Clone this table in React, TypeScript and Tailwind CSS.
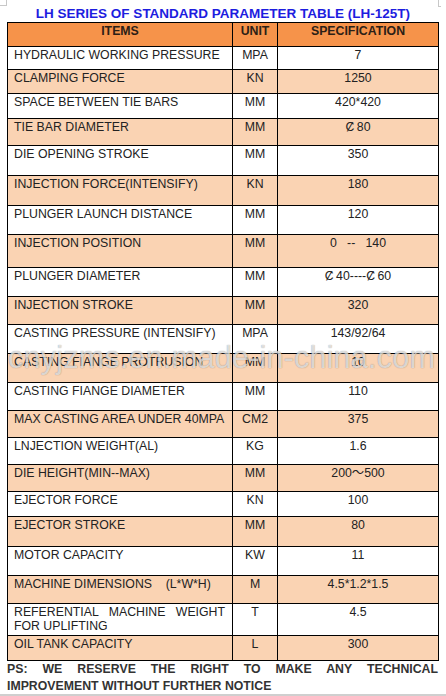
import React from "react";

type Row = {
  item: string;
  unit: string;
  spec: string;
  h: number;
};

const rows: Row[] = [
  { item: "HYDRAULIC WORKING PRESSURE", unit: "MPA", spec: "7", h: 23 },
  { item: "CLAMPING FORCE", unit: "KN", spec: "1250", h: 24 },
  { item: "SPACE BETWEEN TIE BARS", unit: "MM", spec: "420*420", h: 25 },
  { item: "TIE BAR DIAMETER", unit: "MM", spec: "Ȼ\u200980", h: 27 },
  { item: "DIE OPENING STROKE", unit: "MM", spec: "350", h: 30 },
  { item: "INJECTION FORCE(INTENSIFY)", unit: "KN", spec: "180", h: 30 },
  { item: "PLUNGER LAUNCH DISTANCE", unit: "MM", spec: "120", h: 29 },
  { item: "INJECTION POSITION", unit: "MM", spec: "0   --   140", h: 33 },
  { item: "PLUNGER DIAMETER", unit: "MM", spec: "Ȼ\u200940----Ȼ\u200960", h: 29 },
  { item: "INJECTION STROKE", unit: "MM", spec: "320", h: 28 },
  { item: "CASTING PRESSURE (INTENSIFY)", unit: "MPA", spec: "143/92/64", h: 29 },
  { item: "CASTING FIANGE PROTRUSION", unit: "MM", spec: "10", h: 29 },
  { item: "CASTING FIANGE DIAMETER", unit: "MM", spec: "110", h: 28 },
  { item: "MAX CASTING AREA UNDER 40MPA", unit: "CM2", spec: "375", h: 27 },
  { item: "LNJECTION WEIGHT(AL)", unit: "KG", spec: "1.6", h: 27 },
  { item: "DIE HEIGHT(MIN--MAX)", unit: "MM", spec: "200～500", h: 27 },
  { item: "EJECTOR FORCE", unit: "KN", spec: "100", h: 25 },
  { item: "EJECTOR STROKE", unit: "MM", spec: "80", h: 30 },
  { item: "MOTOR CAPACITY", unit: "KW", spec: "11", h: 29 },
  { item: "MACHINE DIMENSIONS    (L*W*H)", unit: "M", spec: "4.5*1.2*1.5", h: 28 },
  { item: "REFERENTIAL MACHINE WEIGHT FOR UPLIFTING", unit: "T", spec: "4.5", h: 32 },
  { item: "OIL TANK CAPACITY", unit: "L", spec: "300", h: 25 },
];

const App = () => {
  return (
    <div className="relative w-[446px] h-[696px] overflow-hidden bg-white font-['Liberation_Sans','Noto_Sans_CJK_SC',sans-serif] text-[#222]">
      {/* corner marks */}
      <span className="absolute left-0 top-0 w-[7px] h-[6px] border-r border-b border-[#c8c8c8]" />
      <span className="absolute right-[5px] top-0 w-[3px] h-[7px] border-l border-b border-[#c8c8c8]" />

      <div className="h-[22px] pt-[5px] text-center text-[13.5px] leading-[17px] font-bold text-[#1d1ddf]">
        LH SERIES OF STANDARD PARAMETER TABLE (LH-125T)
      </div>

      <table className="ml-[7px] w-[431px] table-fixed border-collapse text-[12.3px] leading-[14px]">
        <colgroup>
          <col className="w-[225px]" />
          <col className="w-[45px]" />
          <col className="w-[161px]" />
        </colgroup>
        <thead>
          <tr className="h-[24px] bg-[#f6934a] font-bold text-[#2b2016]">
            <th className="border border-black align-top pt-[1px] text-center">ITEMS</th>
            <th className="border border-black align-top pt-[1px] text-center">UNIT</th>
            <th className="border border-black align-top pt-[1px] text-center">SPECIFICATION</th>
          </tr>
        </thead>
        <tbody>
          {rows.map((row, i) => (
            <tr key={row.item} style={{ height: row.h }} className={i % 2 === 1 ? "bg-[#fad3b3]" : "bg-white"}>
              <td className="border border-black align-top pt-[1px] pl-[6px] pr-[7px] text-justify whitespace-pre-wrap">
                {row.item}
              </td>
              <td className="border border-black align-top pt-[1px] text-center">{row.unit}</td>
              <td className="border border-black align-top pt-[1px] text-center whitespace-pre">{row.spec}</td>
            </tr>
          ))}
        </tbody>
      </table>

      <div className="ml-[7px] w-[431px] text-[12.3px] leading-[17px] font-bold text-[#333]">
        <p className="text-justify [text-align-last:justify]">PS: WE RESERVE THE RIGHT TO MAKE ANY TECHNICAL</p>
        <p>IMPROVEMENT WITHOUT FURTHER NOTICE</p>
      </div>
      <div className="absolute left-0 bottom-0 w-full h-[2px] bg-[#cfcfcf]" />

      {/* watermark */}
      <div className="absolute left-[8px] top-[340px] text-[31px] leading-[36px] text-white/70 whitespace-nowrap [text-shadow:0_0_1px_rgba(0,0,0,0.45)] pointer-events-none">
        cnyjzms.en.made-in-china.com
      </div>
    </div>
  );
};

export default App;
